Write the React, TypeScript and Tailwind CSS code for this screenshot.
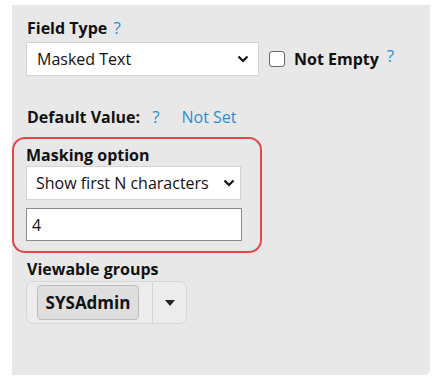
import React from "react";

const Help = ({ className = "" }: { className?: string }) => (
  <span className={`text-[#1e8fd8] font-normal ${className}`}>?</span>
);

const Chevron = () => (
  <svg width="12" height="8" viewBox="0 0 12 8" className="shrink-0">
    <path d="M1.5 1.5 L6 6 L10.5 1.5" fill="none" stroke="#111" strokeWidth="2.2" />
  </svg>
);

const SelectBox = ({ value, className }: { value: string; className: string }) => (
  <div
    className={`flex items-center justify-between bg-white border border-[#d4d4d4] ${className}`}
  >
    <span className="text-[16px] text-[#111] whitespace-nowrap">{value}</span>
    <Chevron />
  </div>
);

export default function App() {
  return (
    <div
      className="w-[440px] h-[383px] bg-white pt-[5px] pl-[12px]"
      style={{ fontFamily: '"Open Sans", "Noto Sans", sans-serif' }}
    >
      <div className="w-[418px] h-[370px] bg-[#e8e8e8] rounded-br-[6px] pt-[12px] text-[#111]">
        <div className="pl-[15px]">
          <div className="text-[16px] font-bold leading-[22px]">
            Field Type <Help className="ml-[2px] text-[17px]" />
          </div>
          <div className="flex items-center mt-[3px] -ml-[1px]">
            <SelectBox value="Masked Text" className="w-[233px] h-[34px] pl-[10px] pr-[9px]" />
            <span className="ml-[10px] w-[16px] h-[16px] rounded-[3px] border-[1.5px] border-[#666] bg-white" />
            <span className="ml-[9px] text-[16px] font-bold">Not Empty</span>
            <Help className="ml-[8px] text-[17px] -mt-[6px]" />
          </div>
          <div className="mt-[30px] flex items-center text-[16px] leading-[22px]">
            <span className="font-bold">Default Value:</span>
            <Help className="ml-[12px] text-[17px]" />
            <span className="ml-[22px] text-[#1e8fd8]">Not Set</span>
          </div>
        </div>

        <div className="mt-[9px] w-[250px] h-[116px] border-2 border-[#e5464a] rounded-[13px] pl-[12px] pt-[5px]">
          <div className="text-[16px] font-bold leading-[22px]">Masking option</div>
          <SelectBox
            value="Show first N characters"
            className="w-[215px] h-[34px] pl-[9px] pr-[5px]"
          />
          <div className="mt-[8px] w-[216px] h-[33px] bg-white border border-[#8a8a8a] flex items-center pl-[5px] text-[16px]">
            4
          </div>
        </div>

        <div className="pl-[15px] mt-[5px]">
          <div className="text-[16px] font-bold leading-[22px]">Viewable groups</div>
          <div className="mt-[1px] -ml-[1px] flex w-[161px] h-[43px] rounded-[7px] border border-[#d6d6d6] bg-[#ececec]">
            <div className="flex items-center pl-[10px] pr-[13px] border-r border-[#d3d3d3]">
              <span className="flex items-center justify-center w-[102px] h-[35px] rounded-[4px] border border-[#bdbdbd] bg-[#dedede] text-[17px] font-bold">
                SYSAdmin
              </span>
            </div>
            <div className="flex-1 flex items-center justify-center">
              <svg width="10" height="6" viewBox="0 0 10 6">
                <path d="M0 0 H10 L5 6 Z" fill="#222" />
              </svg>
            </div>
          </div>
        </div>
      </div>
    </div>
  );
}
